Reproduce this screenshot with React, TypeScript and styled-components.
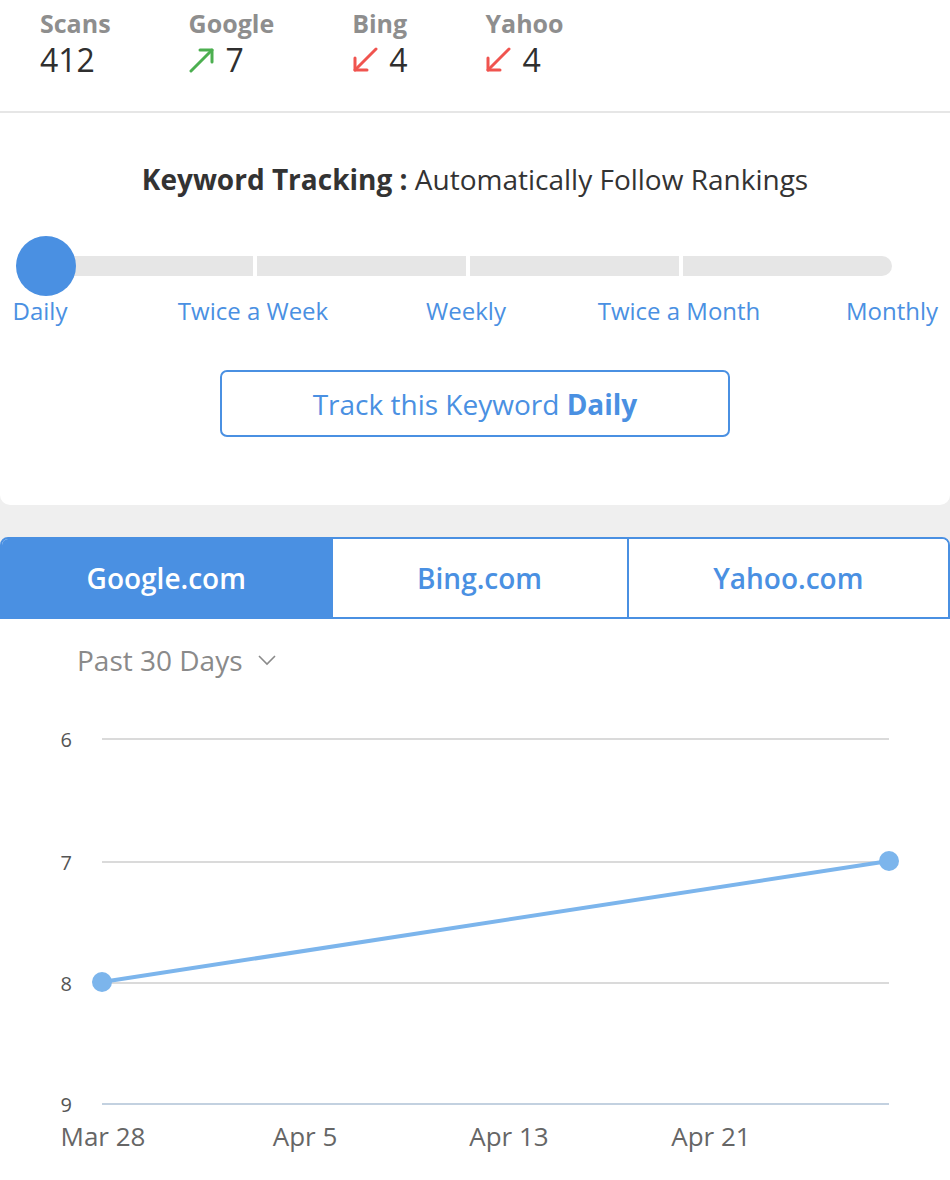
import React from 'react';
import styled, { createGlobalStyle } from 'styled-components';

const GlobalStyle = createGlobalStyle`
  body {
    margin: 0;
    background: #efefef;
    font-family: "Open Sans", "Noto Sans", sans-serif;
  }
`;

const Page = styled.div`
  width: 950px;
  background: #efefef;
`;

const StatsBar = styled.div`
  display: flex;
  gap: 78px;
  height: 113px;
  padding-left: 40px;
  padding-top: 6px;
  box-sizing: border-box;
  background: #fff;
  border-bottom: 2px solid #e6e6e6;
`;

const Stat = styled.div`
  display: flex;
  flex-direction: column;
`;

const StatLabel = styled.div`
  font-size: 25px;
  font-weight: 700;
  line-height: 34px;
  color: #8e8e8e;
`;

const StatValue = styled.div`
  display: flex;
  align-items: center;
  gap: 11px;
  font-size: 32px;
  line-height: 39px;
  color: #2f2f2f;
`;

const Card = styled.div`
  background: #fff;
  border-radius: 0 0 10px 10px;
  padding: 47px 0 68px;
`;

const Heading = styled.h2`
  margin: 0;
  text-align: center;
  font-size: 28px;
  line-height: 38px;
  font-weight: 400;
  color: #333;

  strong {
    font-weight: 700;
  }
`;

const Slider = styled.div`
  position: relative;
  height: 59px;
  margin: 38px 0 0 44px;
  width: 848px;
  display: flex;
  align-items: center;
`;

const Track = styled.div`
  display: flex;
  gap: 4px;
  width: 100%;
  height: 20px;
`;

const Segment = styled.div<{ $last?: boolean }>`
  flex: 1;
  background: #e6e6e6;
  border-radius: ${({ $last }) => ($last ? '0 10px 10px 0' : '0')};
`;

const Knob = styled.div`
  position: absolute;
  left: -28px;
  top: 0;
  width: 60px;
  height: 60px;
  border-radius: 50%;
  background: #4a90e2;
`;

const Stops = styled.div`
  display: flex;
  justify-content: space-between;
  margin-left: 40px;
  width: 852px;
  height: 32px;
`;

const Stop = styled.div`
  width: 0;
  display: flex;
  justify-content: center;
  white-space: nowrap;
  font-size: 24px;
  line-height: 32px;
  color: #4a90e2;
`;

const TrackButton = styled.button`
  display: block;
  width: 510px;
  height: 67px;
  margin: 43px auto 0;
  background: #fff;
  border: 2px solid #4a90e2;
  border-radius: 7px;
  font-family: inherit;
  font-size: 28px;
  color: #4a90e2;
  cursor: pointer;

  strong {
    font-weight: 700;
  }
`;

const Tabs = styled.div`
  display: flex;
  margin-top: 32px;
  height: 82px;
  background: #fff;
  border: 2px solid #4a90e2;
  border-radius: 8px 8px 0 0;
  box-sizing: border-box;
  overflow: hidden;
`;

const Tab = styled.div<{ $active?: boolean }>`
  flex: 1 1 auto;
  display: flex;
  align-items: center;
  justify-content: center;
  font-size: 28px;
  font-weight: 600;
  color: ${({ $active }) => ($active ? '#fff' : '#4a90e2')};
  background: ${({ $active }) => ($active ? '#4a90e2' : '#fff')};
  & + & {
    border-left: 2px solid #4a90e2;
  }
`;

const ChartPanel = styled.div`
  background: #fff;
`;

const RangePicker = styled.div`
  display: flex;
  align-items: center;
  gap: 14px;
  height: 81px;
  padding-left: 77px;
  font-size: 28px;
  color: #8a8a8a;
`;

const Chart = styled.svg`
  display: block;
  font-family: "Open Sans", "Noto Sans", sans-serif;
`;

const Arrow = ({ up }: { up?: boolean }) => (
  <svg width="26" height="26" viewBox="0 0 26 26" fill="none"
    stroke={up ? '#4caf50' : '#f0544f'} strokeWidth="3" strokeLinecap="round" strokeLinejoin="round">
    {up ? (
      <>
        <line x1="2" y1="24" x2="23" y2="3" />
        <polyline points="11,3 23,3 23,15" />
      </>
    ) : (
      <>
        <line x1="24" y1="2" x2="3" y2="23" />
        <polyline points="3,11 3,23 15,23" />
      </>
    )}
  </svg>
);

const Chevron = () => (
  <svg width="20" height="12" viewBox="0 0 20 12" fill="none" stroke="#8a8a8a" strokeWidth="1.6">
    <polyline points="2,2 10,10 18,2" />
  </svg>
);

const stats = [
  { label: 'Scans', value: '412' },
  { label: 'Google', value: '7', trend: 'up' },
  { label: 'Bing', value: '4', trend: 'down' },
  { label: 'Yahoo', value: '4', trend: 'down' },
];

const stops = ['Daily', 'Twice a Week', 'Weekly', 'Twice a Month', 'Monthly'];

const yTicks = [
  { label: '6', y: 39 },
  { label: '7', y: 162 },
  { label: '8', y: 283 },
  { label: '9', y: 404 },
];

const xTicks = [
  { label: 'Mar 28', x: 103 },
  { label: 'Apr 5', x: 305 },
  { label: 'Apr 13', x: 509 },
  { label: 'Apr 21', x: 711 },
];

export default function App() {
  return (
    <Page>
      <GlobalStyle />
      <StatsBar>
        {stats.map((s) => (
          <Stat key={s.label}>
            <StatLabel>{s.label}</StatLabel>
            <StatValue>
              {s.trend && <Arrow up={s.trend === 'up'} />}
              {s.value}
            </StatValue>
          </Stat>
        ))}
      </StatsBar>

      <Card>
        <Heading>
          <strong>Keyword Tracking :</strong> Automatically Follow Rankings
        </Heading>
        <Slider>
          <Track>
            <Segment />
            <Segment />
            <Segment />
            <Segment $last />
          </Track>
          <Knob />
        </Slider>
        <Stops>
          {stops.map((s) => (
            <Stop key={s}>{s}</Stop>
          ))}
        </Stops>
        <TrackButton>
          Track this Keyword <strong>Daily</strong>
        </TrackButton>
      </Card>

      <Tabs>
        <Tab $active>Google.com</Tab>
        <Tab>Bing.com</Tab>
        <Tab>Yahoo.com</Tab>
      </Tabs>

      <ChartPanel>
        <RangePicker>
          Past 30 Days
          <Chevron />
        </RangePicker>
        <Chart width="950" height="480" viewBox="0 0 950 480">
          {yTicks.map((t, i) => (
            <g key={t.label}>
              <line x1="102" x2="889" y1={t.y} y2={t.y}
                stroke={i === yTicks.length - 1 ? '#c3d1e0' : '#dadada'} strokeWidth="2" />
              <text x="72" y={t.y + 8} textAnchor="end" fontSize="20" fill="#555">{t.label}</text>
            </g>
          ))}
          {xTicks.map((t) => (
            <text key={t.label} x={t.x} y="446" textAnchor="middle" fontSize="26" fill="#666">{t.label}</text>
          ))}
          <line x1="102" y1="282" x2="889" y2="161" stroke="#7cb5ec" strokeWidth="4" />
          <circle cx="102" cy="282" r="10" fill="#7cb5ec" />
          <circle cx="889" cy="161" r="10" fill="#7cb5ec" />
        </Chart>
      </ChartPanel>
    </Page>
  );
}
